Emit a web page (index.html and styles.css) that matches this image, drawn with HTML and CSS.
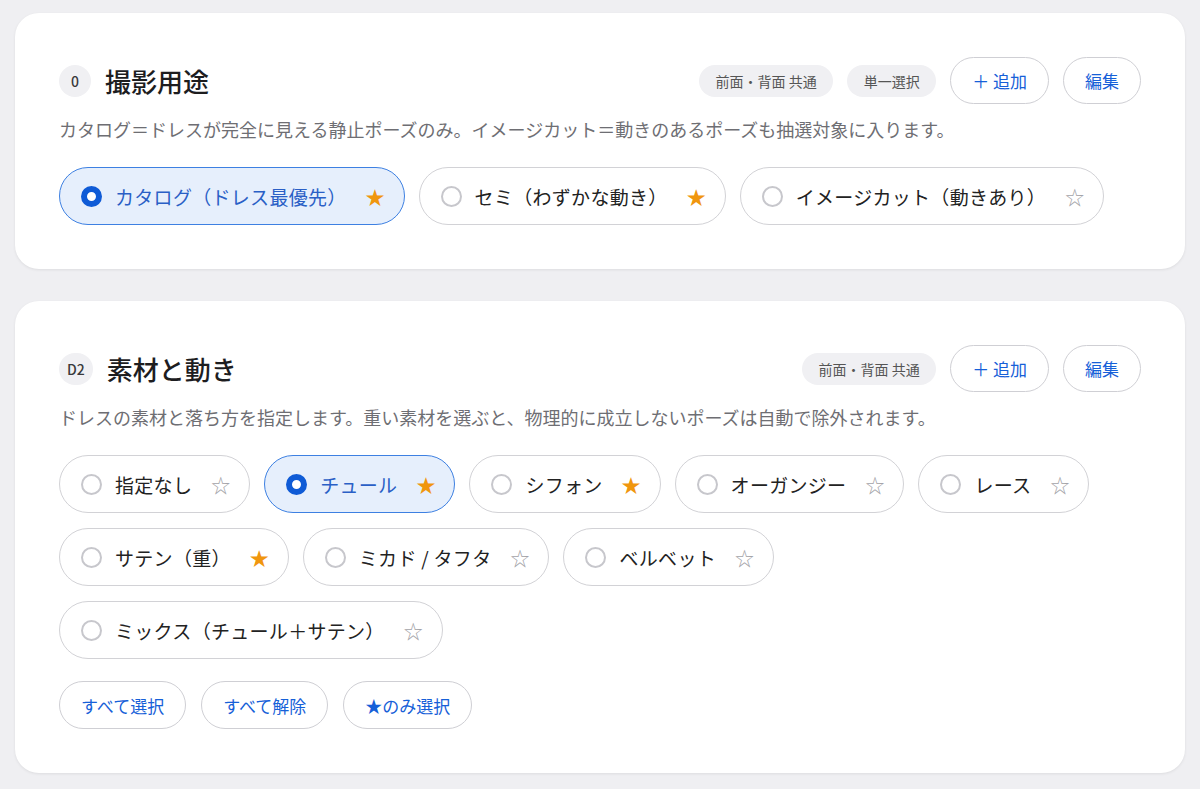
FILE: index.html
```html
<!doctype html>
<html lang="ja">

<head>
  <meta charset="UTF-8" />
  <meta name="viewport" content="width=device-width, initial-scale=1.0" />
  <title>撮影設定</title>
  <link rel="stylesheet" href="styles.css">
</head>

<body>
  <section class="card">
    <div class="card-head">
      <div class="head-left">
        <span class="code">0</span>
        <h2 class="title">撮影用途</h2>
      </div>
      <div class="head-right">
        <span class="tag">前面・背面 共通</span>
        <span class="tag">単一選択</span>
        <button class="btn">＋ 追加</button>
        <button class="btn">編集</button>
      </div>
    </div>
    <p class="desc">カタログ＝ドレスが完全に見える静止ポーズのみ。イメージカット＝動きのあるポーズも抽選対象に入ります。</p>
    <div class="options">
      <label class="opt selected"><span class="radio"></span><span class="label">カタログ（ドレス最優先）</span><span class="star on">★</span></label>
      <label class="opt"><span class="radio"></span><span class="label">セミ（わずかな動き）</span><span class="star on">★</span></label>
      <label class="opt"><span class="radio"></span><span class="label">イメージカット（動きあり）</span><span class="star">☆</span></label>
    </div>
  </section>

  <section class="card">
    <div class="card-head">
      <div class="head-left">
        <span class="code">D2</span>
        <h2 class="title">素材と動き</h2>
      </div>
      <div class="head-right">
        <span class="tag">前面・背面 共通</span>
        <button class="btn">＋ 追加</button>
        <button class="btn">編集</button>
      </div>
    </div>
    <p class="desc">ドレスの素材と落ち方を指定します。重い素材を選ぶと、物理的に成立しないポーズは自動で除外されます。</p>
    <div class="options">
      <label class="opt"><span class="radio"></span><span class="label">指定なし</span><span class="star">☆</span></label>
      <label class="opt selected"><span class="radio"></span><span class="label">チュール</span><span class="star on">★</span></label>
      <label class="opt"><span class="radio"></span><span class="label">シフォン</span><span class="star on">★</span></label>
      <label class="opt"><span class="radio"></span><span class="label">オーガンジー</span><span class="star">☆</span></label>
      <label class="opt"><span class="radio"></span><span class="label">レース</span><span class="star">☆</span></label>
      <label class="opt"><span class="radio"></span><span class="label">サテン（重）</span><span class="star on">★</span></label>
      <label class="opt"><span class="radio"></span><span class="label">ミカド / タフタ</span><span class="star">☆</span></label>
      <label class="opt"><span class="radio"></span><span class="label">ベルベット</span><span class="star">☆</span></label>
      <label class="opt"><span class="radio"></span><span class="label">ミックス（チュール＋サテン）</span><span class="star">☆</span></label>
    </div>
    <div class="bulk">
      <button class="btn">すべて選択</button>
      <button class="btn">すべて解除</button>
      <button class="btn">★のみ選択</button>
    </div>
  </section>
</body>

</html>
```

FILE: styles.css
```css
body {
  font-family: "Noto Sans CJK JP", "Noto Sans", sans-serif;
  margin: 0;
  padding: 13px 15px;
  background-color: #efeff2;
  color: #1d1d1f;
  display: flex;
  flex-direction: column;
  gap: 32px;
}

.card {
  background: #fff;
  border-radius: 24px;
  padding: 44px;
  box-shadow: 0 1px 3px rgba(0, 0, 0, 0.08);
}

.card-head {
  display: flex;
  align-items: center;
  justify-content: space-between;
  height: 47px;
}

.head-left {
  display: flex;
  align-items: center;
  gap: 14px;
}

.code {
  min-width: 32px;
  height: 32px;
  padding: 0 8px;
  box-sizing: border-box;
  border-radius: 16px;
  background: #f0f0f3;
  color: #3a3a3c;
  font-size: 14px;
  font-weight: 500;
  display: flex;
  align-items: center;
  justify-content: center;
}

.title {
  margin: 0;
  font-size: 26px;
  font-weight: 500;
  line-height: 1.2;
}

.head-right {
  display: flex;
  align-items: center;
  gap: 14px;
}

.tag {
  height: 32px;
  padding: 0 16.5px;
  border-radius: 16px;
  background: #f0f0f3;
  color: #555;
  font-size: 14px;
  display: flex;
  align-items: center;
}

.btn {
  font-family: inherit;
  height: 47px;
  padding: 0 21px;
  border: 1.5px solid #cfcfd4;
  border-radius: 24px;
  background: #fff;
  color: #1660d8;
  font-size: 17px;
  cursor: pointer;
}

.desc {
  margin: 11px 0 24px;
  font-size: 18px;
  line-height: 28px;
  color: #6e6e73;
}

.options {
  display: flex;
  flex-wrap: wrap;
  gap: 15px 14px;
}

.opt {
  display: flex;
  align-items: center;
  height: 58px;
  box-sizing: border-box;
  padding: 0 20px 0 21px;
  border: 1.5px solid #d2d2d6;
  border-radius: 29px;
  background: #fff;
  font-size: 19px;
  letter-spacing: 0.3px;
  color: #222;
}

.opt.selected {
  background: #e6effc;
  border-color: #3d80e2;
  color: #2a5fc6;
}

.radio {
  width: 21px;
  height: 21px;
  box-sizing: border-box;
  border: 2px solid #c7c7cc;
  border-radius: 50%;
  margin-right: 13px;
}

.selected .radio {
  border: 6px solid #0f5bd6;
  background: #fff;
}

.star {
  margin-left: 19px;
  width: 18px;
  text-align: center;
  font-size: 19px;
  color: #a3a3a8;
}

.star.on {
  color: #f0960e;
}

.bulk {
  display: flex;
  gap: 15px;
  margin-top: 22px;
}

.bulk .btn {
  height: 48px;
}
```
